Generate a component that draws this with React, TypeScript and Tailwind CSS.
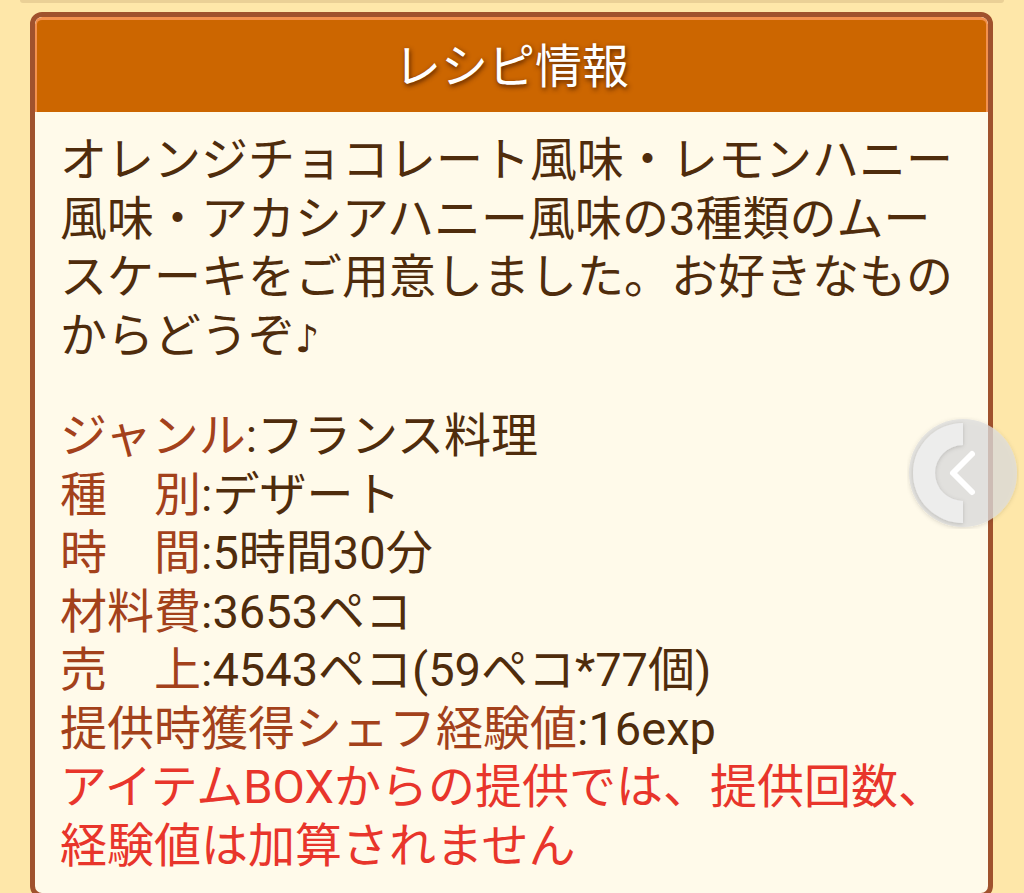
export default function App() {
    return (
        <div className="relative min-h-[893px] w-full overflow-hidden bg-[#fee7a9] font-['Roboto','Noto_Sans_CJK_JP',sans-serif]">
            {/* 上のカードの下端 */}
            <div className="mx-[20px] h-[3px] rounded-b-[4px] bg-[#ead096]" />

            <div className="ml-[30px] mr-[31px] mt-[9px] overflow-hidden rounded-[12px] border-[5px] border-[#a0522d] bg-[#fffaea]">
                <div className="flex h-[95px] items-center justify-center rounded-t-[7px] border-x-[2px] border-t-[3px] border-[#f3914e] bg-[#cc6600]">
                    <h2 className="text-[47px] leading-none text-white [text-shadow:1px_2px_5px_rgba(70,25,0,0.9)]">レシピ情報</h2>
                </div>

                <div className="pb-[18px] pl-[25px] pr-[20px] pt-[19px] text-[47px] leading-[58.5px] text-[#4f2c0c]">
                    <p className="mb-[39px] whitespace-nowrap">
                        オレンジチョコレート風味・レモンハニー
                        <br />
                        風味・アカシアハニー風味の3種類のムー
                        <br />
                        スケーキをご用意しました。お好きなもの
                        <br />
                        からどうぞ<span className="font-['DejaVu_Sans',sans-serif] text-[38px]">♪</span>
                    </p>

                    <div className="whitespace-nowrap">
                        <InfoRow label="ジャンル" value="フランス料理" />
                        <InfoRow label="種　別" value="デザート" />
                        <InfoRow label="時　間" value="5時間30分" />
                        <InfoRow label="材料費" value="3653ペコ" />
                        <InfoRow label="売　上" value="4543ペコ(59ペコ*77個)" />
                        <InfoRow label="提供時獲得シェフ経験値" value="16exp" />
                        <div className="text-[#e8352b]">
                            アイテムBOXからの提供では、提供回数、
                            <br />
                            経験値は加算されません
                        </div>
                    </div>
                </div>
            </div>

            {/* 右側の戻るボタン */}
            <div className="absolute left-[907px] top-[417px] h-[112px] w-[112px]">
                <svg viewBox="0 0 112 112" className="h-full w-full">
                    <defs>
                        <filter id="sh" x="-20%" y="-20%" width="140%" height="140%">
                            <feDropShadow dx="0" dy="1" stdDeviation="2" floodColor="#000" floodOpacity="0.18" />
                        </filter>
                    </defs>
                    <circle cx="56" cy="56" r="54" fill="rgba(222,222,222,0.75)" filter="url(#sh)" />
                    <path d="M56 6 A50 50 0 0 0 56 106 L56 84 A28 28 0 0 1 56 28 Z" fill="rgba(238,238,238,0.95)" filter="url(#sh)" />
                    <path d="M65 37 L46 56 L65 75" fill="none" stroke="#ffffff" strokeWidth="6" strokeLinecap="round" strokeLinejoin="round" />
                </svg>
            </div>
        </div>
    )
}

function InfoRow({ label, value }: { label: string; value: string }) {
    return (
        <div>
            <span className="text-[#a3411b]">{label}</span>
            <span>:{value}</span>
        </div>
    )
}
